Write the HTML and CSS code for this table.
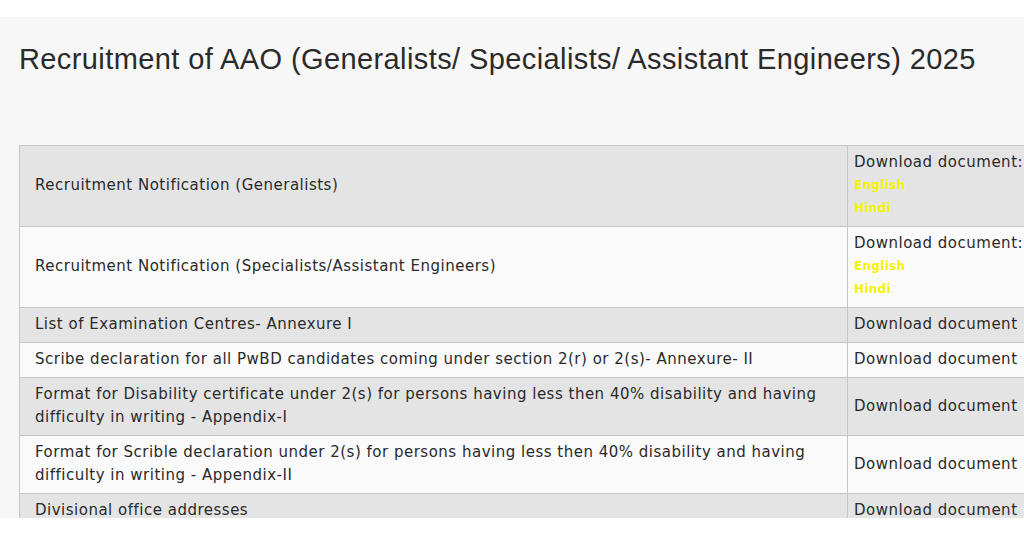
FILE: index.html
```html
<!DOCTYPE html>
<html lang="en">
<head>
<meta charset="utf-8">
<title>Recruitment of AAO 2025</title>
<link rel="stylesheet" href="styles.css">
</head>
<body>
<div class="topbar"></div>
<main class="panel">
  <h1 class="title">Recruitment of AAO (Generalists/ Specialists/ Assistant Engineers) 2025</h1>
  <table class="docs">
    <colgroup><col class="c-name"><col class="c-link"></colgroup>
    <tbody>
      <tr class="odd">
        <td class="name">Recruitment Notification (Generalists)</td>
        <td class="link">Download document:<a class="lang" href="#">English</a><a class="lang" href="#">Hindi</a></td>
      </tr>
      <tr class="even">
        <td class="name">Recruitment Notification (Specialists/Assistant Engineers)</td>
        <td class="link">Download document:<a class="lang" href="#">English</a><a class="lang" href="#">Hindi</a></td>
      </tr>
      <tr class="odd">
        <td class="name">List of Examination Centres- Annexure I</td>
        <td class="link">Download document</td>
      </tr>
      <tr class="even">
        <td class="name">Scribe declaration for all PwBD candidates coming under section 2(r) or 2(s)- Annexure- II</td>
        <td class="link">Download document</td>
      </tr>
      <tr class="odd">
        <td class="name">Format for Disability certificate under 2(s) for persons having less then 40% disability and having difficulty in writing - Appendix-I</td>
        <td class="link">Download document</td>
      </tr>
      <tr class="even">
        <td class="name">Format for Scrible declaration under 2(s) for persons having less then 40% disability and having difficulty in writing - Appendix-II</td>
        <td class="link">Download document</td>
      </tr>
      <tr class="odd">
        <td class="name">Divisional office addresses</td>
        <td class="link">Download document</td>
      </tr>
    </tbody>
  </table>
</main>
</body>
</html>
```
FILE: styles.css
```css
html, body {
  margin: 0;
  padding: 0;
  overflow: hidden;
  background: #ffffff;
}
body {
  width: 1024px;
  height: 536px;
  font-family: "DejaVu Sans", "Liberation Sans", sans-serif;
  color: #2a2a2a;
}
.topbar {
  height: 17px;
  background: #ffffff;
}
.panel {
  height: 501px;
  box-sizing: border-box;
  background: #f7f7f7;
  padding: 25px 0 0 19px;
  overflow: hidden;
}
.title {
  margin: 0;
  font-family: "Liberation Sans", sans-serif;
  font-weight: 400;
  font-size: 29px;
  letter-spacing: 0.4px;
  line-height: 34px;
  color: #2a2a2a;
  white-space: nowrap;
}
.docs {
  margin-top: 69px;
  border-collapse: collapse;
  width: 1030px;
  table-layout: fixed;
  font-size: 15px;
  letter-spacing: 0.5px;
  line-height: 23px;
}
.c-name { width: 828px; }
.c-link { width: 202px; }
.docs td {
  border: 1px solid #c6c6c6;
  vertical-align: middle;
  padding: 5px 6px 6px;
}
.docs td.name {
  padding-left: 15px;
  padding-right: 10px;
}
.odd { background: #e4e4e4; }
.even { background: #fafafa; }
.link { white-space: nowrap; }
.lang {
  display: block;
  height: 23px;
  line-height: 23px;
  color: #f4f400;
  text-decoration: none;
  font-weight: 700;
  font-size: 12px;
  letter-spacing: 0.3px;
}
```
